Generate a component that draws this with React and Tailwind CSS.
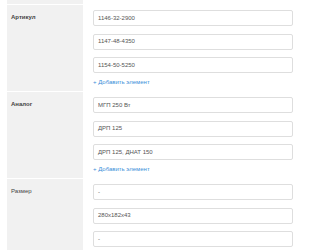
import React from 'react';

const rows = [
  { label: 'Артикул', bold: true, values: ['1146-32-2900', '1147-48-4350', '1154-50-5250'], add: true },
  { label: 'Аналог', bold: true, values: ['МГП 250 Вт', 'ДРП 125', 'ДРП 125, ДНАТ 150'], add: true },
  { label: 'Размер', bold: false, values: ['-', '280x182x43', '-'], add: false },
];

function Field({ value }) {
  return (
    <div className="h-[16px] w-[200px] border border-[#dedede] rounded-[2px] bg-white flex items-center pl-[4px] text-[6px] text-[#555]">
      {value}
    </div>
  );
}

export default function App() {
  return (
    <div className="w-[318px] h-[250px] overflow-hidden bg-white pl-[7px]" style={{ fontFamily: '"Liberation Sans", Arial, sans-serif' }}>
      <div className="flex h-[5px] border-b border-white">
        <div className="w-[76px] bg-[#f1f1f1]" />
      </div>
      {rows.map((row) => (
        <div key={row.label} className="flex border-b border-white">
          <div className={`w-[76px] bg-[#f1f1f1] pl-[4px] pt-[8px] text-[6px] leading-[8px] text-[#444] ${row.bold ? 'font-bold' : 'text-[6.5px]'}`}>
            {row.label}
          </div>
          <div className="pl-[10px] pt-[5px] pb-[4px] flex flex-col gap-[7.5px]">
            {row.values.map((v, i) => (
              <Field key={i} value={v} />
            ))}
            {row.add && (
              <div className="-mt-[3.5px] h-[10px] flex items-center text-[6px] text-[#3b8fd9]">
                + Добавить элемент
              </div>
            )}
          </div>
        </div>
      ))}
    </div>
  );
}
